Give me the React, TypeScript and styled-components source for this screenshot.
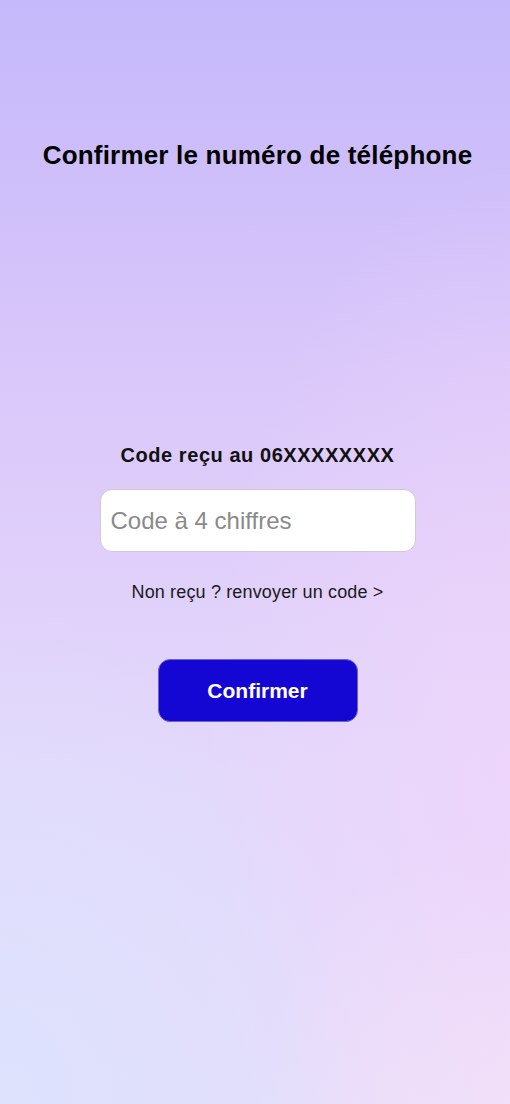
import styled, { createGlobalStyle } from "styled-components";

const GlobalStyle = createGlobalStyle`
  html, body {
    margin: 0;
    padding: 0;
  }
  body {
    font-family: "Liberation Sans", Arial, sans-serif;
  }
`;

const Page = styled.div`
  box-sizing: border-box;
  min-height: 1104px;
  padding-left: 5px;
  display: flex;
  flex-direction: column;
  align-items: center;
  background:
    radial-gradient(ellipse 70% 45% at 0% 100%, rgba(220, 226, 253, 0.9) 0%, rgba(220, 226, 253, 0) 100%),
    radial-gradient(ellipse 60% 55% at 100% 70%, rgba(240, 212, 250, 0.75) 0%, rgba(240, 212, 250, 0) 100%),
    radial-gradient(ellipse 50% 25% at 100% 100%, rgba(244, 230, 248, 0.9) 0%, rgba(244, 230, 248, 0) 100%),
    linear-gradient(180deg, #c5b9fb 0%, #cfbffa 18%, #d9c7fa 33%, #dfcffa 50%, #e3d8fb 70%, #e4defb 100%);
`;

const Title = styled.h1`
  margin: 140px 0 0;
  font-size: 26px;
  line-height: 30px;
  font-weight: bold;
  color: #000;
  letter-spacing: 0.2px;
`;

const Form = styled.div`
  margin-top: 274px;
  display: flex;
  flex-direction: column;
  align-items: center;
`;

const Label = styled.div`
  font-size: 20px;
  line-height: 23px;
  font-weight: bold;
  color: #111;
  letter-spacing: 0.55px;
`;

const CodeInput = styled.input`
  box-sizing: border-box;
  margin-top: 22px;
  width: 316px;
  height: 63px;
  padding: 0 10px;
  border: 1px solid #cfc8d8;
  border-radius: 12px;
  background: #fff;
  font-family: inherit;
  font-size: 24px;
  color: #222;
  outline: none;

  &::placeholder {
    color: #8a8a8a;
  }
`;

const Resend = styled.a`
  margin-top: 30px;
  font-size: 18px;
  line-height: 21px;
  color: #1a1a1a;
  text-decoration: none;
  letter-spacing: 0.15px;
  cursor: pointer;
`;

const Button = styled.button`
  margin-top: 56px;
  width: 200px;
  height: 63px;
  border: 1px solid #6b64c8;
  border-radius: 12px;
  background: #1507d3;
  color: #fff;
  font-family: inherit;
  font-size: 21px;
  font-weight: bold;
  cursor: pointer;
`;

export default function App() {
  return (
    <>
      <GlobalStyle />
      <Page>
        <Title>Confirmer le numéro de téléphone</Title>
        <Form>
          <Label>Code reçu au 06XXXXXXXX</Label>
          <CodeInput placeholder="Code à 4 chiffres" />
          <Resend>Non reçu ? renvoyer un code &gt;</Resend>
          <Button>Confirmer</Button>
        </Form>
      </Page>
    </>
  );
}
